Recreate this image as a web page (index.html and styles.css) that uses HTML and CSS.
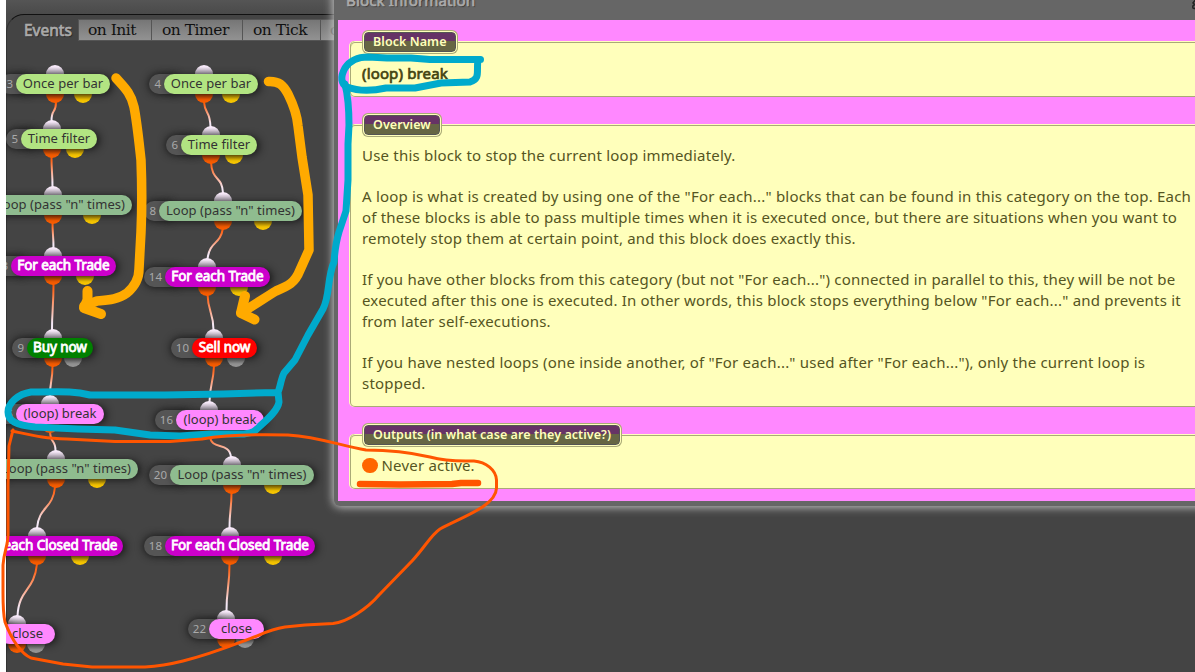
FILE: index.html
```html
<!DOCTYPE html>
<html lang="en">
<head>
<meta charset="utf-8">
<title>Block Information</title>
<link rel="stylesheet" href="styles.css">
</head>
<body>
<main class="app">
  <section class="editor">
    <div class="panel">
      <nav class="tabs">
        <span class="tabs-title">Events</span>
        <span class="tab t1">on Init</span>
        <span class="tab t2">on Timer</span>
        <span class="tab t3">on Tick</span>
        <span class="tab t4">on Trade</span>
      </nav>
    </div>
  </section>

  <div class="canvas">
    <svg class="wires" width="340" height="672">
      <defs>
        <linearGradient id="wire" x1="0" y1="0" x2="0" y2="1">
          <stop offset="0" stop-color="#ff5500"/><stop offset="0.15" stop-color="#ff6a22"/><stop offset="0.85" stop-color="#f4e8f6"/><stop offset="1" stop-color="#f4e8f6"/>
        </linearGradient>
      </defs>
      <g fill="none" stroke="url(#wire)" stroke-width="2">
        <path d="M56 102C56 114 51.500 108 51.500 121"/>
        <path d="M204 102C205 115 210 110 210.500 127"/>
        <path d="M51.500 157C51.500 172 52.500 172 52.500 187"/>
        <path d="M211 162C212 182 222 175 223 193"/>
        <path d="M52.500 222C52.500 235 53.500 235 53.500 248"/>
        <path d="M223 228C220 246 210 240 207.500 259"/>
        <path d="M53.500 284C53.500 306 52 310 52 330"/>
        <path d="M207.500 294C208 313 213.500 312 213.500 330"/>
        <path d="M52.500 366C52.500 382 50 380 50 396"/>
        <path d="M214 366C213 386 210 382 209.500 402"/>
        <path d="M50 430C50 445 55.500 438 55.500 451"/>
        <path d="M210 436C211 451 229 441 231 457"/>
        <path d="M55 487C53 509 39 506 37 528"/>
        <path d="M231.500 492C231.500 510 229.500 510 229.500 528"/>
        <path d="M37 564C34 592 19 588 17.500 616"/>
        <path d="M229.500 564C229.500 588 226.500 588 226.500 611"/>
      </g>
    </svg>
    <div class="node n3 green"><i class="in"></i><i class="out"></i><i class="alt"></i><b class="num">3</b><span class="label">Once per bar</span></div>
    <div class="node n4 green"><i class="in"></i><i class="out"></i><i class="alt"></i><b class="num">4</b><span class="label">Once per bar</span></div>
    <div class="node n5 green"><i class="in"></i><i class="out"></i><i class="alt"></i><b class="num">5</b><span class="label">Time filter</span></div>
    <div class="node n6 green"><i class="in"></i><i class="out"></i><i class="alt"></i><b class="num">6</b><span class="label">Time filter</span></div>
    <div class="node n7 sage"><i class="in"></i><i class="out"></i><i class="alt"></i><b class="num">7</b><span class="label">Loop (pass "n" times)</span></div>
    <div class="node n8 sage"><i class="in"></i><i class="out"></i><i class="alt"></i><b class="num">8</b><span class="label">Loop (pass "n" times)</span></div>
    <div class="node n13 magenta"><i class="in"></i><i class="out"></i><i class="alt"></i><b class="num">13</b><span class="label">For each Trade</span></div>
    <div class="node n14 magenta"><i class="in"></i><i class="out"></i><i class="alt"></i><b class="num">14</b><span class="label">For each Trade</span></div>
    <div class="node n9 buy"><i class="in"></i><i class="out"></i><i class="alt off"></i><b class="num">9</b><span class="label">Buy now</span></div>
    <div class="node n10 sell"><i class="in"></i><i class="out"></i><i class="alt off"></i><b class="num">10</b><span class="label">Sell now</span></div>
    <div class="node n15 pink"><i class="in"></i><i class="out"></i><b class="num">15</b><span class="label">(loop) break</span></div>
    <div class="node n16 pink"><i class="in"></i><i class="out"></i><b class="num">16</b><span class="label">(loop) break</span></div>
    <div class="node n19 sage"><i class="in"></i><i class="out"></i><i class="alt"></i><b class="num">19</b><span class="label">Loop (pass "n" times)</span></div>
    <div class="node n20 sage"><i class="in"></i><i class="out"></i><i class="alt"></i><b class="num">20</b><span class="label">Loop (pass "n" times)</span></div>
    <div class="node n17 magenta"><i class="in"></i><i class="out"></i><i class="alt"></i><b class="num">17</b><span class="label">For each Closed Trade</span></div>
    <div class="node n18 magenta"><i class="in"></i><i class="out"></i><i class="alt"></i><b class="num">18</b><span class="label">For each Closed Trade</span></div>
    <div class="node n21 pink"><i class="in"></i><i class="out"></i><i class="alt off"></i><b class="num">21</b><span class="label">close</span></div>
    <div class="node n22 pink"><i class="in"></i><i class="out"></i><i class="alt off"></i><b class="num">22</b><span class="label">close</span></div>
  </div>

  <section class="dialog">
    <header class="dialog-title">
      <span>Block Information</span>
      <svg class="close" width="6" height="14" viewBox="0 0 6 14"><path d="M6 -1L3 3L6 6M6 4Q2 5 3 8Q4 9 6 8" fill="none" stroke="#222" stroke-width="1.500"/></svg>
    </header>
    <div class="dialog-body">
      <section class="box name-box">
        <h2 class="legend">Block Name</h2>
        <p class="block-name">(loop) break</p>
      </section>
      <section class="box overview-box">
        <h2 class="legend">Overview</h2>
        <p class="copy">Use this block to stop the current loop immediately.<br><br>A loop is what is created by using one of the "For each..." blocks that can be found in this category on the top. Each<br>of these blocks is able to pass multiple times when it is executed once, but there are situations when you want to<br>remotely stop them at certain point, and this block does exactly this.<br><br>If you have other blocks from this category (but not "For each...") connected in parallel to this, they will be not be<br>executed after this one is executed. In other words, this block stops everything below "For each..." and prevents it<br>from later self-executions.<br><br>If you have nested loops (one inside another, of "For each..." used after "For each..."), only the current loop is<br>stopped.</p>
      </section>
      <section class="box output-box">
        <h2 class="legend">Outputs (in what case are they active?)</h2>
        <p class="copy output"><i class="dot"></i>Never active.</p>
      </section>
    </div>
  </section>

  <svg class="ink" width="1195" height="672" fill="none" stroke-linecap="round" stroke-linejoin="round">
    <g stroke="#ffaa00" stroke-width="9.500">
      <path d="M116 78C124 87 131 93 134 107C137 122 139 142 141 160C142 185 142 210 141 232L139 269C139 280 134 287 127 293C119 299 110 300 97 301L84 306"/>
      <path d="M87.500 291V300L84 308L101 314" stroke-width="10"/>
      <path d="M268.500 81.500C279 81 283 85 288 94C294 106 297 114 298 126L302 157L308 195L309 250L300 270C295 283 288 286 276 291C266 297 256 304 241 313"/>
      <path d="M245 296L241 313L254.500 319.500" stroke-width="10"/>
    </g>
    <g stroke="#00aacc" stroke-width="7">
      <path d="M276 392.500L223 394L165 395H90C75 391 65 391.500 31 392C18 394 8 403 8 412C8 421 16 425 35 427L78 429L115 430L150 435L180 436L210 434H244C254 433 256 430 260 426C268 419 278 410 279 402L278 392C280 388 281 379 284 373L295 360L308 335L323 309C330 296 327 278 334 262C335 248 336 242 339 232L346 211L348 180V144L349 125C349 111 348 96 345 84"/>
      <path d="M480.500 59.500H430L411 58H387L368 57C357 57 349 62 345 68C340 77 341 84 347 87C355 90 368 92 386 88H415L441 83L470 82C481 78 476 72 478 60"/>
    </g>
    <g stroke="#ff5500">
      <path stroke-width="3" d="M12 431C36 436 43 438 67 439L115 441.500H170L202 439C225 435 250 434 288 435C320 437 341 446 366 450C388 450 413 453 430 457C448 462 461 461 474 461C486 462 496 470 496.500 480V488C496 506 462 517 440 529C431 535 425 547 412 561L379 595C367 609 347 622 333 623.500L305 625L285 627C272 629 266 632 257 636C235 644 215 653 183 661C171 664 163 666 145 667H92L63 664L31 658C22 654 12 641 5 622C3 613 3 604 3 593V565C4 551 8 546 8 535V485L9 446L13 430"/>
      <path stroke-width="6.500" d="M360 484L400 484.500L452 484L461 483H478"/>
    </g>
  </svg>
</main>
</body>
</html>
```

FILE: styles.css
```css
* { box-sizing: border-box; }
body { margin: 0; background: #fff; font-family: "Noto Sans", "Open Sans", sans-serif; }
.app { position: relative; width: 1195px; height: 672px; overflow: hidden; }

.editor { height: 672px; margin-left: 6px; padding-top: 14px; background: linear-gradient(#555, #4a4a4a 14px, #444 40px); }
.panel { height: 658px; border-top: 1px solid #111; border-left: 1px solid #333; border-radius: 18px 0 0 0; background: #444; padding-top: 4px; }
.tabs { display: flex; height: 22px; }
.tabs-title { width: 71px; padding-left: 17px; font: 15.500px/22px "Noto Sans", sans-serif; -webkit-text-stroke: 0.7px #aaa; color: #aaa; text-shadow: 1px 1px 1px #222; }
.tab { flex: none; height: 22px; padding-left: 9px; border: 1px solid #555; border-left-width: 0; background: linear-gradient(#767676, #929292); font: 15.500px/20px "DejaVu Serif", serif; color: #111; white-space: nowrap; letter-spacing: -0.500px; }
.t1 { width: 74px; border-left-width: 1px; }
.t2 { width: 91px; padding-left: 10px; }
.t3 { width: 78px; padding-left: 10px; }
.t4 { width: 90px; color: #555; }

/* Flow diagram */
.canvas { position: absolute; left: 6px; top: 0; width: 334px; height: 672px; overflow: hidden; }
.wires { position: absolute; left: -6px; top: 0; }
.node { position: absolute; display: flex; margin-left: -6px; height: 20px; }
.node i { position: absolute; width: 18px; margin-left: -9px; }
.in { top: -9px; left: var(--port); height: 18px; border-radius: 9px; background: linear-gradient(#f8eafa 10%, #a89fac 50%); }
.out, .alt { top: 11px; height: 18px; border-radius: 9px; }
.out { left: var(--port); background: linear-gradient(#a83800 45%, #ff5f00 80%); }
.alt { left: var(--alt); background: linear-gradient(#a88400 45%, #ffcc00 80%); }
.alt.off { background: linear-gradient(#666 45%, #999 80%); }
.num { position: relative; width: var(--tag); margin-right: -12px; padding-right: 15px; height: 20px; border-radius: 10px 0 0 10px; background: #555; box-shadow: 0 0 8px #111; color: #aaa; font: 11.500px/19px "Noto Sans", sans-serif; text-align: right; white-space: nowrap; }
.label { position: relative; flex: 1; height: 20px; border-radius: 10px; font-size: 13px; line-height: 19px; text-align: center; white-space: nowrap; color: #333; box-shadow: 3px 1px 8px -1px #111; }
.green .label { background: #b2e482; }
.sage .label { background: #8fbc8f; }
.sage .label, .green .label { letter-spacing: 0.050px; }
.pink .label { background: #ff88ff; }
.magenta .label { background: #cc00cc; }
.buy .label { background: #008000; }
.sell .label { background: #ff0000; }
.magenta .label, .buy .label, .sell .label { color: #fff; font-size: 13.500px; letter-spacing: -0.080px; -webkit-text-stroke: 0.8px #fff; }

.n3 { left: 0; top: 74px; width: 110px; --tag: 28px; --port: 55px; --alt: 82.500px; }
.n4 { left: 149px; top: 74px; width: 109px; --tag: 27px; --port: 54.500px; --alt: 82px; }
.n5 { left: 6px; top: 129px; width: 91px; --tag: 27px; --port: 45.500px; --alt: 68.500px; }
.n6 { left: 166px; top: 135px; width: 91px; --tag: 27px; --port: 45px; --alt: 68px; }
.n7 { left: -26px; top: 195px; width: 158px; --tag: 27px; --port: 78.500px; --alt: 118px; }
.n8 { left: 144px; top: 201px; width: 158px; --tag: 27px; --port: 79px; --alt: 118.500px; }
.n13 { left: -10px; top: 256px; width: 126px; --tag: 33px; --port: 63px; --alt: 94.500px; }
.n14 { left: 144px; top: 267px; width: 126px; --tag: 33px; --port: 63px; --alt: 94.500px; }
.n9 { left: 12px; top: 338px; width: 81px; --tag: 27px; --port: 40.500px; --alt: 61px; }
.n10 { left: 171px; top: 338px; width: 86px; --tag: 33px; --port: 43px; --alt: 64.500px; }
.n15 { left: -5px; top: 404px; width: 109px; --tag: 33px; --port: 54.500px; }
.n16 { left: 155px; top: 410px; width: 109px; --tag: 33px; --port: 54px; }
.n19 { left: -26px; top: 459px; width: 164px; --tag: 33px; --port: 81.500px; --alt: 123px; }
.n20 { left: 149px; top: 465px; width: 165px; --tag: 33px; --port: 82.500px; --alt: 124px; }
.n17 { left: -47px; top: 536px; width: 170px; --tag: 33px; --port: 84px; --alt: 127px; }
.n18 { left: 144px; top: 536px; width: 171px; --tag: 33px; --port: 85.500px; --alt: 128.500px; }
.n21 { left: -21px; top: 624px; width: 76px; --tag: 33px; --port: 37.500px; --alt: 57px; }
.n22 { left: 188px; top: 619px; width: 76px; --tag: 33px; --port: 37.500px; --alt: 57px; }

/* Information window */
.dialog { position: absolute; left: 334px; top: -10px; width: 880px; height: 516px; padding: 10px 0 5px 4px; background: #666; border-radius: 0 0 0 6px; box-shadow: 0 0 10px 1px #ccc; }
.dialog-title { position: relative; height: 20px; overflow: hidden; }
.dialog-title span { display: block; margin: -11px 0 0 8px; font: 15px/22px "Noto Sans", sans-serif; letter-spacing: 0.150px; -webkit-text-stroke: 0.7px #aaa; color: #aaa; text-shadow: 1px 1px 1px #333; }
.close { position: absolute; left: 852px; top: 0; }
.dialog-body { display: flex; flex-direction: column; gap: 27px; height: 481px; padding: 21px 0 12px 12px; background: #ff88ff; }
.box { position: relative; border: 1px solid #aaaa77; border-top-width: 0; border-radius: 5px; background: #ffffbb; box-shadow: inset 0 1px #ffffbb, inset 0 2px #aaaa77, -1px 0 #ffffbb; padding: 1px 0 0 11px; }
.name-box { height: 56px; }
.overview-box { height: 283px; }
.output-box { height: 55px; }
.legend { position: relative; width: max-content; height: 20px; margin: -10px 0 0 2px; padding: 0 8px; border: 1px solid #555; border-radius: 4px; outline: 1px solid #ffffbb; box-shadow: 0 0 0 2px #aaaa77; background: linear-gradient(#663366 8px, #666644 8px); color: #ffffbb; font: 600 12.500px/17px "Noto Sans", "Open Sans", sans-serif; letter-spacing: 0.060px; white-space: nowrap; }
.block-name { margin: 11px 0 0; font-size: 15px; line-height: 21px; letter-spacing: 0.150px; -webkit-text-stroke: 0.7px #444411; color: #444411; }
.copy { margin: 9.600px 0 0; font-size: 15px; line-height: 20.750px; letter-spacing: 0.200px; color: #555522; white-space: nowrap; }
.output { display: flex; align-items: center; gap: 3.500px; }
.dot { width: 16px; height: 15px; border-radius: 8px; background: #ff6600; position: relative; top: 1px; }

.ink { position: absolute; left: 0; top: 0; }
```
